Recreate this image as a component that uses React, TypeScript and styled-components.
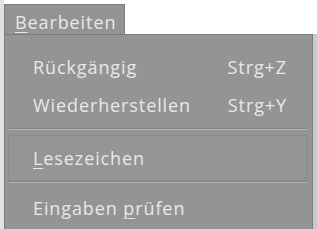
import React from "react";
import styled, { createGlobalStyle } from "styled-components";

const Global = createGlobalStyle`
  html, body { margin: 0; padding: 0; background: #ffffff; }
  body { width: 317px; height: 229px; overflow: hidden; font-family: "Open Sans", "Noto Sans", sans-serif; }
`;

const Page = styled.div`
  display: flex;
  flex-direction: column;
  align-items: flex-start;
  padding: 4px 0 0 0;
  height: 229px;
  box-sizing: border-box;
  background: linear-gradient(to right, #e2e2e2 0 4px, #ffffff 4px);
`;

const MenuTitle = styled.div`
  margin-left: 4px;
  width: 121px;
  height: 36px;
  box-sizing: border-box;
  background: #939393;
  border: 1px solid #7c7c7c;
  border-bottom: none;
  display: flex;
  align-items: center;
  padding: 5px 0 0 10px;
  color: #e8e8e8;
  font-size: 18px;
  letter-spacing: 0.9px;
`;

const Panel = styled.div`
  margin-left: 4px;
  width: 309px;
  flex: 1;
  box-sizing: border-box;
  background: #949494;
  border: 1px solid #7c7c7c;
  border-bottom: none;
  box-shadow: 4px 0 0 #c9c9c9;
  padding: 13px 5px 0 3px;
  display: flex;
  flex-direction: column;
`;

const Item = styled.div<{ $h: number; $hover?: boolean }>`
  height: ${(p) => p.$h}px;
  flex: none;
  box-sizing: border-box;
  display: flex;
  align-items: center;
  justify-content: space-between;
  padding: 0 20px 0 24px;
  color: #e8e8e8;
  font-size: 18px;
  letter-spacing: 0.9px;
  border: 1px solid ${(p) => (p.$hover ? "#8b8b8b" : "transparent")};
  background: ${(p) => (p.$hover ? "#959595" : "transparent")};
`;

const Shortcut = styled.span`
  color: #e8e8e8;
  margin-right: -1px;
`;

const Separator = styled.div<{ $top: number; $bottom: number }>`
  flex: none;
  margin: ${(p) => p.$top}px 0 ${(p) => p.$bottom}px 1px;
  height: 1px;
  background: #828282;
  border-bottom: 1px solid #b4b4b4;
`;

const U = styled.span`
  text-decoration: underline;
  text-underline-offset: 3px;
  text-decoration-thickness: 1px;
`;

export default function App() {
  return (
    <>
      <Global />
      <Page>
        <MenuTitle>
          <span>
            <U>B</U>earbeiten
          </span>
        </MenuTitle>
        <Panel>
          <Item $h={38}>
            <span>Rückgängig</span>
            <Shortcut>Strg+Z</Shortcut>
          </Item>
          <Item $h={38}>
            <span>Wiederherstellen</span>
            <Shortcut>Strg+Y</Shortcut>
          </Item>
          <Separator $top={4} $bottom={5} />
          <Item $h={46} $hover>
            <span>
              <U>L</U>esezeichen
            </span>
          </Item>
          <Separator $top={0} $bottom={1} />
          <Item $h={48}>
            <span>
              Eingaben <U>p</U>rüfen
            </span>
          </Item>
        </Panel>
      </Page>
    </>
  );
}
